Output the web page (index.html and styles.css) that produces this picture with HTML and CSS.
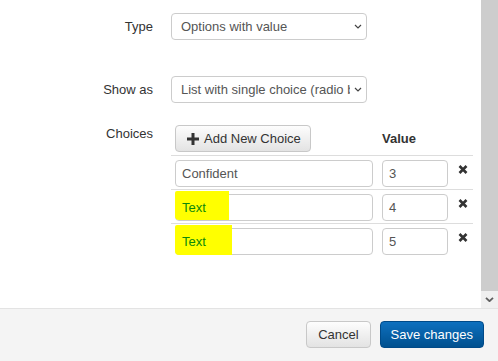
FILE: index.html
```html
<!DOCTYPE html>
<html lang="en">
<head>
  <meta charset="UTF-8" />
  <meta name="viewport" content="width=device-width, initial-scale=1.0"/>
  <title>Edit question</title>
  <link rel="stylesheet" href="styles.css">
</head>
<body>

<!-- MODAL BODY (scrolled) -->
<div class="modal-body">
  <div class="content">
    <div class="form-row">
      <label class="label">Type</label>
      <div class="select">
        <span class="select-text">Options with value</span>
        <svg class="caret" viewBox="0 0 8 5" width="8" height="5"><path d="M1 1l3 3 3-3" fill="none" stroke="#444" stroke-width="1.2"/></svg>
      </div>
    </div>

    <div class="form-row row-gap">
      <label class="label">Show as</label>
      <div class="select">
        <span class="select-text">List with single choice (radio buttons)</span>
        <svg class="caret" viewBox="0 0 8 5" width="8" height="5"><path d="M1 1l3 3 3-3" fill="none" stroke="#444" stroke-width="1.2"/></svg>
      </div>
    </div>

    <div class="form-row choices-row">
      <label class="label label-top">Choices</label>
      <table class="choices">
        <colgroup>
          <col class="col-choice">
          <col class="col-value">
          <col class="col-remove">
        </colgroup>
        <thead>
          <tr>
            <th>
              <button class="btn btn-add">
                <svg viewBox="0 0 12 12" width="12" height="12"><path d="M6 0v12M0 6h12" stroke="#333" stroke-width="3"/></svg>
                Add New Choice
              </button>
            </th>
            <th class="th-value">Value</th>
            <th></th>
          </tr>
        </thead>
        <tbody>
          <tr>
            <td><div class="field field-choice">Confident</div></td>
            <td><div class="field field-value">3</div></td>
            <td><svg class="remove" viewBox="0 0 10 9" width="10" height="9"><path d="M1.5 1l7 7M8.5 1l-7 7" stroke="#333" stroke-width="2.6"/></svg></td>
          </tr>
          <tr>
            <td>
              <div class="field field-choice">
                <span class="hl"></span>
                <span class="marked">Text</span>
              </div>
            </td>
            <td><div class="field field-value">4</div></td>
            <td><svg class="remove" viewBox="0 0 10 9" width="10" height="9"><path d="M1.5 1l7 7M8.5 1l-7 7" stroke="#333" stroke-width="2.6"/></svg></td>
          </tr>
          <tr>
            <td>
              <div class="field field-choice">
                <span class="hl hl-wide"></span>
                <span class="marked">Text</span>
              </div>
            </td>
            <td><div class="field field-value">5</div></td>
            <td><svg class="remove" viewBox="0 0 10 9" width="10" height="9"><path d="M1.5 1l7 7M8.5 1l-7 7" stroke="#333" stroke-width="2.6"/></svg></td>
          </tr>
        </tbody>
      </table>
    </div>
  </div>

  <div class="scrollbar">
    <div class="thumb"></div>
    <div class="arrow">
      <svg viewBox="0 0 9 5" width="9" height="5"><path d="M1 0.8l3.5 3.4L8 0.8" fill="none" stroke="#606060" stroke-width="1.8"/></svg>
    </div>
  </div>
</div>

<!-- FOOTER -->
<div class="modal-footer">
  <button class="btn btn-default">Cancel</button>
  <button class="btn btn-primary">Save changes</button>
</div>

</body>
</html>
```

FILE: styles.css
```css
:root {
  --text-color: #333;
  --input-text: #555;
  --border: #ccc;
  --line: #ddd;
}

* {
  box-sizing: border-box;
  margin: 0;
  padding: 0;
}

body {
  font-family: 'Liberation Sans', Arial, sans-serif;
  font-size: 13px;
  color: var(--text-color);
  background: #fff;
  width: 498px;
  height: 361px;
  overflow: hidden;
}

.modal-body {
  display: flex;
  height: 308px;
}

.content {
  flex: 1;
  padding-top: 13px;
}

.scrollbar {
  width: 17px;
  display: flex;
  flex-direction: column;
  background: #f0f0f0;
}

.thumb {
  flex: 1;
  background: #cdcdcd;
}

.arrow {
  height: 17px;
  display: flex;
  align-items: center;
  justify-content: center;
}

.form-row {
  display: grid;
  grid-template-columns: 153px auto;
  column-gap: 18px;
  align-items: center;
  justify-content: start;
}

.row-gap {
  margin-top: 36px;
}

.choices-row {
  margin-top: 18px;
  align-items: start;
}

.label {
  text-align: right;
  line-height: 18px;
}

.label-top {
  padding-top: 4px;
}

.select {
  width: 196px;
  height: 27px;
  border: 1px solid var(--border);
  border-radius: 4px;
  display: flex;
  align-items: center;
  padding: 0 4px 0 9px;
  color: var(--input-text);
  background: #fff;
}

.select-text {
  flex: 1;
  white-space: nowrap;
  overflow: hidden;
}

.caret {
  margin-left: 4px;
  flex-shrink: 0;
}

/* choices table */
.choices {
  width: 302px;
  border-collapse: collapse;
  table-layout: fixed;
}

.col-choice { width: 207px; }
.col-value { width: 74px; }
.col-remove { width: 21px; }

.choices th {
  padding: 4px 0 3px 4px;
  text-align: left;
  vertical-align: middle;
}

.th-value {
  font-weight: bold;
  padding-top: 2px;
}

.choices td {
  border-top: 1px solid var(--line);
  padding: 4px 0 2px 4px;
  vertical-align: top;
}

.choices td:last-child {
  padding-left: 6px;
}

.remove {
  display: block;
  margin-top: 5px;
}

.field {
  position: relative;
  height: 27px;
  border: 1px solid var(--border);
  border-radius: 4px;
  padding: 0 6px;
  display: flex;
  align-items: center;
  color: var(--input-text);
  background: #fff;
}

.field-choice { width: 198px; }
.field-value { width: 66px; }

.hl {
  position: absolute;
  left: -1px;
  top: -4px;
  width: 54px;
  height: 29px;
  background: #ffff00;
  border-radius: 2px 0 0 4px;
}

.hl-wide {
  width: 57px;
  height: 30px;
}

.marked {
  position: relative;
  color: #0d880d;
}

/* buttons */
.btn {
  font-family: inherit;
  font-size: 13px;
  height: 27px;
  padding: 0 11px;
  border-radius: 4px;
  cursor: pointer;
  display: inline-flex;
  align-items: center;
}

.btn-default,
.btn-add {
  color: var(--text-color);
  border: 1px solid #c8c8c8;
  background: linear-gradient(#fdfdfd, #e3e3e3);
}

.btn-add {
  width: 136px;
  padding: 0 0 0 11px;
  gap: 5px;
}

.btn-primary {
  color: #fff;
  border: 1px solid #004a88;
  padding: 0 10px;
  background: linear-gradient(#0e70be, #00508f);
}

.modal-footer {
  border-top: 1px solid #e3e3e3;
  background: #f4f4f4;
  height: 53px;
  display: flex;
  justify-content: flex-end;
  align-items: flex-start;
  gap: 9px;
  padding: 12px 14px 0 0;
}
```
